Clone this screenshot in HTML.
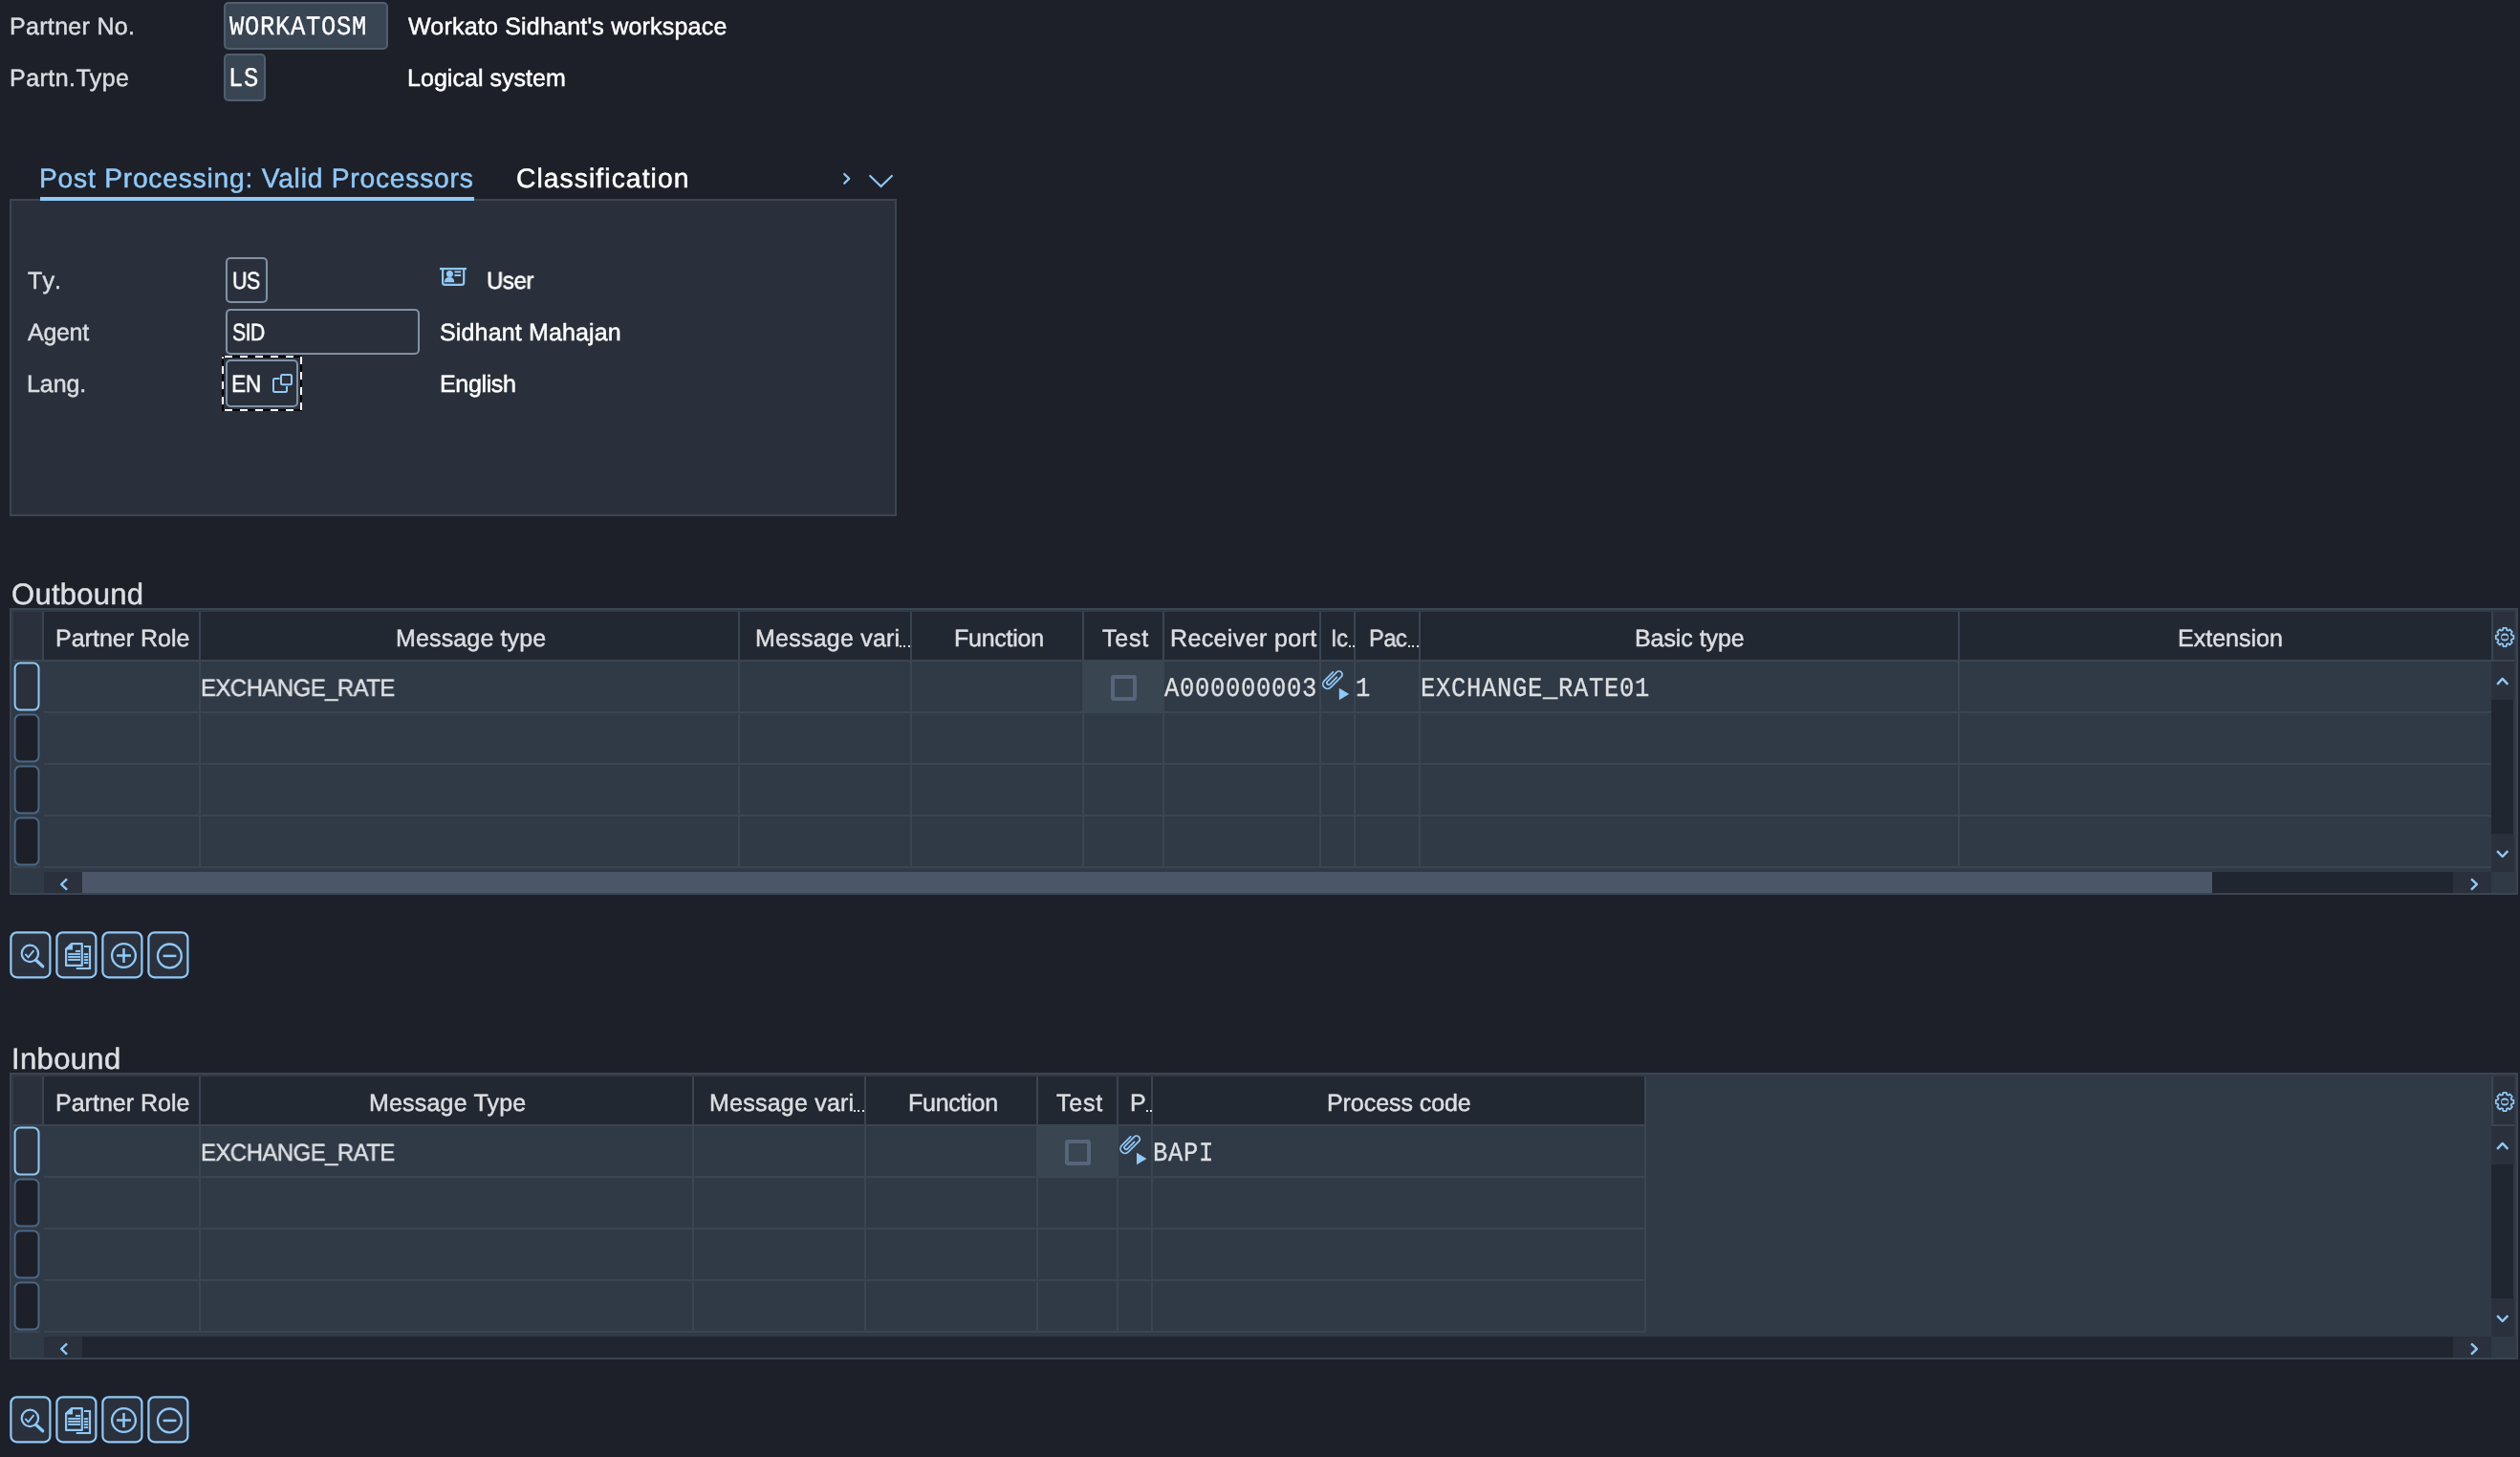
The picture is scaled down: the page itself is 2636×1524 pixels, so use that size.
<!DOCTYPE html>
<html><head><meta charset="utf-8"><title>Partner profiles</title>
<style>
html,body{margin:0;padding:0;}
body{width:2636px;height:1524px;background:#1D2029;position:relative;overflow:hidden;font-family:"Liberation Sans", sans-serif;}
.a{position:absolute;box-sizing:border-box;}
.t{position:absolute;white-space:pre;font-family:"Liberation Sans", sans-serif;will-change:transform;text-rendering:geometricPrecision;-webkit-text-stroke:0.5px currentColor;}
.m{position:absolute;white-space:pre;font-family:"Liberation Mono", monospace;will-change:transform;text-rendering:geometricPrecision;-webkit-text-stroke:0.3px currentColor;}
.ro{background:#3A4553;border:2px solid #4F5E70;border-radius:5px;}
.in{background:#2A303B;border:2px solid #8091A5;border-radius:5px;}
.g{background:#3A4552;}
.tb{background:#2A313C;border:2.5px solid #91C8F6;border-radius:8px;}
.rs{background:#1D2029;border:2px solid #4A6784;border-radius:7px;}
.rs1{background:#2A313C;border:2px solid #91C8F6;border-radius:7px;}
.cb{background:#3A4552;border:4px solid #56657A;border-radius:3px;}
svg{position:absolute;overflow:visible;}
</style></head><body>
<div class="a ro" style="left:234px;top:2px;width:172px;height:49.6px;"></div>
<div class="a ro" style="left:234px;top:56px;width:43.5px;height:49.6px;"></div>
<div class="a " style="left:10px;top:208px;width:928px;height:332px;background:#2A303B;border:2px solid #3B4552;"></div>
<div class="a " style="left:42px;top:206px;width:454px;height:4px;background:#91C8F6;"></div>
<svg style="left:875px;top:175px" width="70" height="30" viewBox="875 175 70 30"><path d="M883.2 182 L888.2 186.9 L883.2 191.8" fill="none" stroke="#91C8F6" stroke-width="2.2" stroke-linecap="round" stroke-linejoin="round"/><path d="M910.2 183.9 L921.5 195.1 L932.9 183.9" fill="none" stroke="#91C8F6" stroke-width="2.1" stroke-linecap="round"/></svg>
<div class="a in" style="left:236px;top:269px;width:43.5px;height:48px;"></div>
<div class="a in" style="left:236px;top:323px;width:203px;height:48px;"></div>
<div class="a in" style="left:236px;top:376px;width:75.7px;height:49.8px;"></div>
<svg style="left:231px;top:371px" width="86" height="60" viewBox="231 371 86 60"><rect x="233" y="373" width="82" height="56" fill="none" stroke="#000" stroke-width="2"/><rect x="233" y="373" width="82" height="56" fill="none" stroke="#fff" stroke-width="2" stroke-dasharray="8 8" stroke-dashoffset="-2"/></svg>
<svg style="left:458px;top:278px" width="32" height="24" viewBox="458 278 32 24"><rect x="460" y="280" width="28" height="2.2" fill="#91C8F6"/><path d="M463.1 281 V295.4 Q463.1 297.8 465.5 297.8 H482.8 Q485.2 297.8 485.2 295.4 V281" fill="none" stroke="#91C8F6" stroke-width="2.2"/><circle cx="470.4" cy="286.4" r="3.5" fill="#91C8F6"/><path d="M464.9 295.2 Q464.9 290 470.2 290 Q475.2 290 475.2 295.2 Z" fill="#91C8F6"/><rect x="475.4" y="283.4" width="6.8" height="2" fill="#91C8F6"/><rect x="475.4" y="287" width="6.8" height="2" fill="#91C8F6"/></svg>
<svg style="left:284px;top:390px" width="24" height="22" viewBox="284 390 24 22"><path d="M292.5 396 H287.5 Q286 396 286 397.5 V408.5 Q286 410 287.5 410 H298.5 Q300 410 300 408.5 V404" fill="none" stroke="#91C8F6" stroke-width="2"/><rect x="294" y="392" width="11" height="10.2" rx="1.5" fill="none" stroke="#91C8F6" stroke-width="2"/></svg>
<div class="a " style="left:10px;top:636px;width:2624px;height:300px;background:#303A46;border:2px solid #3A4552;"></div>
<div class="a " style="left:14px;top:640px;width:30px;height:50px;background:#2A313C;"></div>
<div class="a " style="left:46px;top:640px;width:2560px;height:50px;background:#222832;"></div>
<div class="a " style="left:2606px;top:640px;width:2px;height:50px;background:#3A4552;"></div>
<div class="a " style="left:2608px;top:640px;width:22px;height:50px;background:#2A313C;"></div>
<div class="a " style="left:2606px;top:690px;width:24px;height:2px;background:#3A4552;"></div>
<div class="a " style="left:14px;top:690px;width:2592px;height:2px;background:#3A4552;"></div>
<div class="a " style="left:46px;top:744px;width:2560px;height:2px;background:#3A4552;"></div>
<div class="a " style="left:46px;top:798px;width:2560px;height:2px;background:#3A4552;"></div>
<div class="a " style="left:46px;top:852px;width:2560px;height:2px;background:#3A4552;"></div>
<div class="a " style="left:46px;top:906px;width:2560px;height:2px;background:#3A4552;"></div>
<div class="a " style="left:14px;top:906px;width:28px;height:1.5px;background:#3A4552;"></div>
<div class="a " style="left:44px;top:640px;width:2px;height:52px;background:#3A4552;"></div>
<div class="a " style="left:208px;top:640px;width:2px;height:268px;background:#3A4552;"></div>
<div class="a " style="left:772px;top:640px;width:2px;height:268px;background:#3A4552;"></div>
<div class="a " style="left:952px;top:640px;width:2px;height:268px;background:#3A4552;"></div>
<div class="a " style="left:1132px;top:640px;width:2px;height:268px;background:#3A4552;"></div>
<div class="a " style="left:1216px;top:640px;width:2px;height:268px;background:#3A4552;"></div>
<div class="a " style="left:1380px;top:640px;width:2px;height:268px;background:#3A4552;"></div>
<div class="a " style="left:1416px;top:640px;width:2px;height:268px;background:#3A4552;"></div>
<div class="a " style="left:1484px;top:640px;width:2px;height:268px;background:#3A4552;"></div>
<div class="a " style="left:2048px;top:640px;width:2px;height:268px;background:#3A4552;"></div>
<div class="a " style="left:1132px;top:690px;width:86px;height:56px;background:#3A4552;"></div>
<div class="a " style="left:2606px;top:692px;width:24px;height:40px;background:#2A313C;"></div>
<div class="a " style="left:2606px;top:732px;width:23px;height:140px;background:#20262F;"></div>
<div class="a " style="left:2606px;top:872px;width:24px;height:40px;background:#2A313C;"></div>
<div class="a " style="left:46px;top:912px;width:40px;height:22px;background:#2A313C;"></div>
<div class="a " style="left:86px;top:912px;width:2480px;height:22px;background:#20262F;"></div>
<div class="a " style="left:86px;top:912px;width:2228px;height:22px;background:#4B5768;"></div>
<div class="a " style="left:2566px;top:912px;width:40px;height:22px;background:#2A313C;"></div>
<div class="a cb" style="left:1162px;top:706px;width:27px;height:27px;"></div>
<svg style="left:0;top:636px" width="2636" height="300" viewBox="0 636 2636 300">
<rect x="15.6" y="693.6" width="24.9" height="49" rx="5.6" fill="#2A313C" stroke="#91C8F6" stroke-width="2"/>
<rect x="15.6" y="747.6" width="24.9" height="49" rx="5.6" fill="#1D2029" stroke="#4A6784" stroke-width="2"/>
<rect x="15.6" y="801.6" width="24.9" height="49" rx="5.6" fill="#1D2029" stroke="#4A6784" stroke-width="2"/>
<rect x="15.6" y="855.6" width="24.9" height="49" rx="5.6" fill="#1D2029" stroke="#4A6784" stroke-width="2"/>
<path d="M2618.05 659.00 L2618.27 656.89 L2621.83 656.89 L2622.05 659.00 L2623.75 659.73 L2625.35 658.39 L2627.87 660.99 L2626.58 662.64 L2627.28 664.39 L2629.33 664.61 L2629.33 668.29 L2627.28 668.51 L2626.58 670.26 L2627.87 671.91 L2625.35 674.51 L2623.75 673.17 L2622.05 673.90 L2621.83 676.01 L2618.27 676.01 L2618.05 673.90 L2616.35 673.17 L2614.75 674.51 L2612.23 671.91 L2613.52 670.26 L2612.82 668.51 L2610.77 668.29 L2610.77 664.61 L2612.82 664.39 L2613.52 662.64 L2612.23 660.99 L2614.75 658.39 L2616.35 659.73 Z" fill="none" stroke="#91C8F6" stroke-width="1.75" stroke-linejoin="round"/><circle cx="2620.05" cy="666.45" r="4.0" fill="#91C8F6"/><ellipse cx="2620.05" cy="666.45" rx="3.2" ry="2.0" fill="#2A313C"/>
<path d="M2612.1 715.85 L2617.7 709.9499999999999 L2623.2999999999997 715.85" fill="none" stroke="#91C8F6" stroke-width="2.4" stroke-linejoin="round"/>
<path d="M2612.1 890.0999999999999 L2617.7 896.0 L2623.2999999999997 890.0999999999999" fill="none" stroke="#91C8F6" stroke-width="2.4" stroke-linejoin="round"/>
<path d="M70.05 919.4 L64.14999999999999 925 L70.05 930.6" fill="none" stroke="#91C8F6" stroke-width="2.4" stroke-linejoin="round"/>
<path d="M2585.0 919.35 L2590.8999999999996 924.95 L2585.0 930.5500000000001" fill="none" stroke="#91C8F6" stroke-width="2.4" stroke-linejoin="round"/>
<g transform="translate(1393.60 710.55) rotate(-45) scale(0.93)"><path d="M6.5 -5.2 H-7.5 A5.2 5.2 0 0 0 -7.5 5.2 H9.2 A3.7 3.7 0 0 0 9.2 -2.2 H-5.6 A2.1 2.1 0 0 0 -5.6 2 H5.2" fill="none" stroke="#91C8F6" stroke-width="1.9" stroke-linecap="round"/></g><path d="M1400.80 719.70 L1411.20 725.90 L1400.80 732.30 Z" fill="#91C8F6"/>
</svg>
<svg style="left:0;top:972px" width="220" height="54" viewBox="0 972 220 54">
<rect x="11.4" y="975.3" width="41" height="47.1" rx="6.2" fill="#2A313C" stroke="#91C8F6" stroke-width="2.2"/>
<rect x="59.4" y="975.3" width="41" height="47.1" rx="6.2" fill="#2A313C" stroke="#91C8F6" stroke-width="2.2"/>
<rect x="107.4" y="975.3" width="41" height="47.1" rx="6.2" fill="#2A313C" stroke="#91C8F6" stroke-width="2.2"/>
<rect x="155.4" y="975.3" width="41" height="47.1" rx="6.2" fill="#2A313C" stroke="#91C8F6" stroke-width="2.2"/>
<circle cx="31.4" cy="997.4" r="8.7" fill="none" stroke="#91C8F6" stroke-width="2.2"/>
<path d="M37.6 1004.3 L44.7 1010.8" stroke="#91C8F6" stroke-width="3.2" stroke-linecap="round"/>
<path d="M26.4 997.9 L29.6 1001.3 L35.4 994.1" fill="none" stroke="#91C8F6" stroke-width="1.9"/>
<path d="M79.8 1013.0 H94 V990.0 H88" fill="none" stroke="#91C8F6" stroke-width="2.2"/>
<rect x="87.8" y="997.1" width="4.4" height="2" fill="#91C8F6"/>
<rect x="87.8" y="1000.1" width="4.4" height="2" fill="#91C8F6"/>
<rect x="87.8" y="1003.1" width="4.4" height="2" fill="#91C8F6"/>
<rect x="87.8" y="1006.1" width="4.4" height="2" fill="#91C8F6"/>
<path d="M69.1 992.5 L75 987.1 H85.8 V1009.9 H69.1 Z" fill="#2A313C" stroke="#91C8F6" stroke-width="2.2" stroke-linejoin="round"/>
<path d="M69.1 992.9 L75.4 987.1 V992.9 Z" fill="#91C8F6" stroke="#91C8F6" stroke-width="1.2" stroke-linejoin="round"/>
<rect x="79" y="993.9" width="5" height="2" fill="#91C8F6"/>
<rect x="71.2" y="996.9" width="12.8" height="2" fill="#91C8F6"/>
<rect x="71.2" y="999.9" width="12.8" height="2" fill="#91C8F6"/>
<rect x="71.2" y="1002.9" width="12.8" height="2" fill="#91C8F6"/>
<circle cx="129.5" cy="999.5" r="12.4" fill="none" stroke="#91C8F6" stroke-width="2.3"/>
<path d="M122 999.5 H137 M129.5 992.0 V1007.0" stroke="#91C8F6" stroke-width="2.5"/>
<circle cx="177.4" cy="999.9" r="12.4" fill="none" stroke="#91C8F6" stroke-width="2.3"/>
<path d="M170.6 999.9 H184.4" stroke="#91C8F6" stroke-width="2.5"/>
</svg>
<div class="a " style="left:10px;top:1122px;width:2624px;height:300px;background:#303A46;border:2px solid #3A4552;"></div>
<div class="a " style="left:14px;top:1126px;width:30px;height:50px;background:#2A313C;"></div>
<div class="a " style="left:46px;top:1126px;width:1676px;height:50px;background:#222832;"></div>
<div class="a " style="left:2606px;top:1126px;width:2px;height:50px;background:#3A4552;"></div>
<div class="a " style="left:2608px;top:1126px;width:22px;height:50px;background:#2A313C;"></div>
<div class="a " style="left:2606px;top:1176px;width:24px;height:2px;background:#3A4552;"></div>
<div class="a " style="left:14px;top:1176px;width:1708px;height:2px;background:#3A4552;"></div>
<div class="a " style="left:46px;top:1230px;width:1676px;height:2px;background:#3A4552;"></div>
<div class="a " style="left:46px;top:1284px;width:1676px;height:2px;background:#3A4552;"></div>
<div class="a " style="left:46px;top:1338px;width:1676px;height:2px;background:#3A4552;"></div>
<div class="a " style="left:46px;top:1392px;width:1676px;height:2px;background:#3A4552;"></div>
<div class="a " style="left:14px;top:1392px;width:28px;height:1.5px;background:#3A4552;"></div>
<div class="a " style="left:44px;top:1126px;width:2px;height:52px;background:#3A4552;"></div>
<div class="a " style="left:208px;top:1126px;width:2px;height:268px;background:#3A4552;"></div>
<div class="a " style="left:724px;top:1126px;width:2px;height:268px;background:#3A4552;"></div>
<div class="a " style="left:904px;top:1126px;width:2px;height:268px;background:#3A4552;"></div>
<div class="a " style="left:1084px;top:1126px;width:2px;height:268px;background:#3A4552;"></div>
<div class="a " style="left:1168px;top:1126px;width:2px;height:268px;background:#3A4552;"></div>
<div class="a " style="left:1204px;top:1126px;width:2px;height:268px;background:#3A4552;"></div>
<div class="a " style="left:1720px;top:1126px;width:2px;height:268px;background:#3A4552;"></div>
<div class="a " style="left:1084px;top:1176px;width:86px;height:56px;background:#3A4552;"></div>
<div class="a " style="left:2606px;top:1178px;width:24px;height:40px;background:#2A313C;"></div>
<div class="a " style="left:2606px;top:1218px;width:23px;height:140px;background:#20262F;"></div>
<div class="a " style="left:2606px;top:1358px;width:24px;height:40px;background:#2A313C;"></div>
<div class="a " style="left:46px;top:1398px;width:40px;height:22px;background:#2A313C;"></div>
<div class="a " style="left:86px;top:1398px;width:2480px;height:22px;background:#20262F;"></div>
<div class="a " style="left:2566px;top:1398px;width:40px;height:22px;background:#2A313C;"></div>
<div class="a cb" style="left:1114px;top:1192px;width:27px;height:27px;"></div>
<svg style="left:0;top:1122px" width="2636" height="300" viewBox="0 1122 2636 300">
<rect x="15.6" y="1179.6" width="24.9" height="49" rx="5.6" fill="#2A313C" stroke="#91C8F6" stroke-width="2"/>
<rect x="15.6" y="1233.6" width="24.9" height="49" rx="5.6" fill="#1D2029" stroke="#4A6784" stroke-width="2"/>
<rect x="15.6" y="1287.6" width="24.9" height="49" rx="5.6" fill="#1D2029" stroke="#4A6784" stroke-width="2"/>
<rect x="15.6" y="1341.6" width="24.9" height="49" rx="5.6" fill="#1D2029" stroke="#4A6784" stroke-width="2"/>
<path d="M2618.05 1145.00 L2618.27 1142.89 L2621.83 1142.89 L2622.05 1145.00 L2623.75 1145.73 L2625.35 1144.39 L2627.87 1146.99 L2626.58 1148.64 L2627.28 1150.39 L2629.33 1150.61 L2629.33 1154.29 L2627.28 1154.51 L2626.58 1156.26 L2627.87 1157.91 L2625.35 1160.51 L2623.75 1159.17 L2622.05 1159.90 L2621.83 1162.01 L2618.27 1162.01 L2618.05 1159.90 L2616.35 1159.17 L2614.75 1160.51 L2612.23 1157.91 L2613.52 1156.26 L2612.82 1154.51 L2610.77 1154.29 L2610.77 1150.61 L2612.82 1150.39 L2613.52 1148.64 L2612.23 1146.99 L2614.75 1144.39 L2616.35 1145.73 Z" fill="none" stroke="#91C8F6" stroke-width="1.75" stroke-linejoin="round"/><circle cx="2620.05" cy="1152.45" r="4.0" fill="#91C8F6"/><ellipse cx="2620.05" cy="1152.45" rx="3.2" ry="2.0" fill="#2A313C"/>
<path d="M2612.1 1201.8500000000001 L2617.7 1195.95 L2623.2999999999997 1201.8500000000001" fill="none" stroke="#91C8F6" stroke-width="2.4" stroke-linejoin="round"/>
<path d="M2612.1 1376.1 L2617.7 1382.0 L2623.2999999999997 1376.1" fill="none" stroke="#91C8F6" stroke-width="2.4" stroke-linejoin="round"/>
<path d="M70.05 1405.4 L64.14999999999999 1411 L70.05 1416.6" fill="none" stroke="#91C8F6" stroke-width="2.4" stroke-linejoin="round"/>
<path d="M2585.0 1405.3500000000001 L2590.8999999999996 1410.95 L2585.0 1416.55" fill="none" stroke="#91C8F6" stroke-width="2.4" stroke-linejoin="round"/>
<g transform="translate(1181.80 1196.55) rotate(-45) scale(0.93)"><path d="M6.5 -5.2 H-7.5 A5.2 5.2 0 0 0 -7.5 5.2 H9.2 A3.7 3.7 0 0 0 9.2 -2.2 H-5.6 A2.1 2.1 0 0 0 -5.6 2 H5.2" fill="none" stroke="#91C8F6" stroke-width="1.9" stroke-linecap="round"/></g><path d="M1189.00 1205.70 L1199.40 1211.90 L1189.00 1218.30 Z" fill="#91C8F6"/>
</svg>
<svg style="left:0;top:1458px" width="220" height="54" viewBox="0 1458 220 54">
<rect x="11.4" y="1461.3" width="41" height="47.1" rx="6.2" fill="#2A313C" stroke="#91C8F6" stroke-width="2.2"/>
<rect x="59.4" y="1461.3" width="41" height="47.1" rx="6.2" fill="#2A313C" stroke="#91C8F6" stroke-width="2.2"/>
<rect x="107.4" y="1461.3" width="41" height="47.1" rx="6.2" fill="#2A313C" stroke="#91C8F6" stroke-width="2.2"/>
<rect x="155.4" y="1461.3" width="41" height="47.1" rx="6.2" fill="#2A313C" stroke="#91C8F6" stroke-width="2.2"/>
<circle cx="31.4" cy="1483.4" r="8.7" fill="none" stroke="#91C8F6" stroke-width="2.2"/>
<path d="M37.6 1490.3 L44.7 1496.8" stroke="#91C8F6" stroke-width="3.2" stroke-linecap="round"/>
<path d="M26.4 1483.9 L29.6 1487.3 L35.4 1480.1" fill="none" stroke="#91C8F6" stroke-width="1.9"/>
<path d="M79.8 1499.0 H94 V1476.0 H88" fill="none" stroke="#91C8F6" stroke-width="2.2"/>
<rect x="87.8" y="1483.1" width="4.4" height="2" fill="#91C8F6"/>
<rect x="87.8" y="1486.1" width="4.4" height="2" fill="#91C8F6"/>
<rect x="87.8" y="1489.1" width="4.4" height="2" fill="#91C8F6"/>
<rect x="87.8" y="1492.1" width="4.4" height="2" fill="#91C8F6"/>
<path d="M69.1 1478.5 L75 1473.1 H85.8 V1495.9 H69.1 Z" fill="#2A313C" stroke="#91C8F6" stroke-width="2.2" stroke-linejoin="round"/>
<path d="M69.1 1478.9 L75.4 1473.1 V1478.9 Z" fill="#91C8F6" stroke="#91C8F6" stroke-width="1.2" stroke-linejoin="round"/>
<rect x="79" y="1479.9" width="5" height="2" fill="#91C8F6"/>
<rect x="71.2" y="1482.9" width="12.8" height="2" fill="#91C8F6"/>
<rect x="71.2" y="1485.9" width="12.8" height="2" fill="#91C8F6"/>
<rect x="71.2" y="1488.9" width="12.8" height="2" fill="#91C8F6"/>
<circle cx="129.5" cy="1485.5" r="12.4" fill="none" stroke="#91C8F6" stroke-width="2.3"/>
<path d="M122 1485.5 H137 M129.5 1478.0 V1493.0" stroke="#91C8F6" stroke-width="2.5"/>
<circle cx="177.4" cy="1485.9" r="12.4" fill="none" stroke="#91C8F6" stroke-width="2.3"/>
<path d="M170.6 1485.9 H184.4" stroke="#91C8F6" stroke-width="2.5"/>
</svg>
<div class="t" style="left:9.90px;top:12.00px;font-size:25px;line-height:32px;letter-spacing:0.321px;color:#D9DCE0">Partner No.</div>
<div class="t" style="left:9.90px;top:66.00px;font-size:25px;line-height:32px;letter-spacing:0.456px;color:#D9DCE0">Partn.Type</div>
<div class="m" style="left:240.30px;top:13.00px;font-size:25.5px;line-height:33px;letter-spacing:0.700px;color:#FFFFFF;transform:scaleY(1.11);transform-origin:0 23.00px">WORKATOSM</div>
<div class="m" style="left:238.96px;top:67.00px;font-size:25.5px;line-height:33px;letter-spacing:0.700px;color:#FFFFFF;transform:scaleY(1.11);transform-origin:0 23.00px">LS</div>
<div class="t" style="left:426.70px;top:12.00px;font-size:25px;line-height:32px;letter-spacing:0.201px;color:#FFFFFF">Workato Sidhant's workspace</div>
<div class="t" style="left:425.60px;top:66.00px;font-size:25px;line-height:32px;letter-spacing:0.037px;color:#FFFFFF">Logical system</div>
<div class="t" style="left:40.95px;top:168.00px;font-size:28.2px;line-height:36px;letter-spacing:0.783px;color:#91C8F6">Post Processing: Valid Processors</div>
<div class="t" style="left:540.20px;top:168.00px;font-size:28.2px;line-height:36px;letter-spacing:1.102px;color:#FFFFFF">Classification</div>
<div class="t" style="left:28.70px;top:278.00px;font-size:25px;line-height:32px;letter-spacing:1.682px;color:#D9DCE0">Ty.</div>
<div class="t" style="left:29.10px;top:332.00px;font-size:25px;line-height:32px;letter-spacing:-0.297px;color:#D9DCE0">Agent</div>
<div class="t" style="left:27.70px;top:386.00px;font-size:25px;line-height:32px;letter-spacing:-0.066px;color:#D9DCE0">Lang.</div>
<div class="t" style="left:242.54px;top:278.00px;font-size:25px;line-height:32px;letter-spacing:-0.500px;color:#FFFFFF;transform:scaleX(0.8570);transform-origin:0 0">US</div>
<div class="t" style="left:242.56px;top:332.00px;font-size:25px;line-height:32px;letter-spacing:-0.500px;color:#FFFFFF;transform:scaleX(0.8415);transform-origin:0 0">SID</div>
<div class="t" style="left:242.18px;top:386.00px;font-size:25px;line-height:32px;letter-spacing:-0.500px;color:#FFFFFF;transform:scaleX(0.9078);transform-origin:0 0">EN</div>
<div class="t" style="left:509.34px;top:278.00px;font-size:25px;line-height:32px;letter-spacing:-0.500px;color:#FFFFFF;transform:scaleX(0.9648);transform-origin:0 0">User</div>
<div class="t" style="left:460.10px;top:332.00px;font-size:25px;line-height:32px;letter-spacing:0.148px;color:#FFFFFF">Sidhant Mahajan</div>
<div class="t" style="left:459.60px;top:386.00px;font-size:25px;line-height:32px;letter-spacing:-0.348px;color:#FFFFFF">English</div>
<div class="t" style="left:12.30px;top:602.00px;font-size:31px;line-height:39px;letter-spacing:0.267px;color:#DDDFE2">Outbound</div>
<div class="t" style="left:11.90px;top:1088.00px;font-size:31px;line-height:39px;letter-spacing:0.347px;color:#DDDFE2">Inbound</div>
<div class="t" style="left:57.90px;top:652.00px;font-size:25px;line-height:32px;letter-spacing:0.015px;color:#DCDEE1">Partner Role</div>
<div class="t" style="left:413.50px;top:652.00px;font-size:25px;line-height:32px;letter-spacing:0.142px;color:#DCDEE1">Message type</div>
<div class="t" style="left:789.60px;top:652.00px;font-size:25px;line-height:32px;letter-spacing:0.226px;color:#DCDEE1">Message vari</div>
<div class="t" style="left:997.90px;top:652.00px;font-size:25px;line-height:32px;letter-spacing:-0.255px;color:#DCDEE1">Function</div>
<div class="t" style="left:1152.90px;top:652.00px;font-size:25px;line-height:32px;letter-spacing:0.765px;color:#DCDEE1">Test</div>
<div class="t" style="left:1223.90px;top:652.00px;font-size:25px;line-height:32px;letter-spacing:0.373px;color:#DCDEE1">Receiver port</div>
<div class="t" style="left:1391.92px;top:652.00px;font-size:25px;line-height:32px;letter-spacing:-0.500px;color:#DCDEE1;transform:scaleX(0.9425);transform-origin:0 0">Ic</div>
<div class="t" style="left:1431.91px;top:652.00px;font-size:25px;line-height:32px;letter-spacing:-0.500px;color:#DCDEE1;transform:scaleX(0.9450);transform-origin:0 0">Pac</div>
<div class="t" style="left:1709.90px;top:652.00px;font-size:25px;line-height:32px;letter-spacing:-0.070px;color:#DCDEE1">Basic type</div>
<div class="t" style="left:2277.90px;top:652.00px;font-size:25px;line-height:32px;letter-spacing:0.002px;color:#DCDEE1">Extension</div>
<div class="t" style="left:57.90px;top:1138.00px;font-size:25px;line-height:32px;letter-spacing:0.015px;color:#DCDEE1">Partner Role</div>
<div class="t" style="left:385.90px;top:1138.00px;font-size:25px;line-height:32px;letter-spacing:0.183px;color:#DCDEE1">Message Type</div>
<div class="t" style="left:741.60px;top:1138.00px;font-size:25px;line-height:32px;letter-spacing:0.226px;color:#DCDEE1">Message vari</div>
<div class="t" style="left:949.90px;top:1138.00px;font-size:25px;line-height:32px;letter-spacing:-0.255px;color:#DCDEE1">Function</div>
<div class="t" style="left:1104.90px;top:1138.00px;font-size:25px;line-height:32px;letter-spacing:0.765px;color:#DCDEE1">Test</div>
<div class="t" style="left:1181.70px;top:1138.00px;font-size:25px;line-height:32px;letter-spacing:0.000px;color:#DCDEE1">P</div>
<div class="t" style="left:1387.60px;top:1138.00px;font-size:25px;line-height:32px;letter-spacing:-0.069px;color:#DCDEE1">Process code</div>
<div class="t" style="left:209.99px;top:704.00px;font-size:25px;line-height:32px;letter-spacing:-0.500px;color:#DDDFE2;transform:scaleX(0.9546);transform-origin:0 0">EXCHANGE_RATE</div>
<div class="m" style="left:1218.30px;top:705.00px;font-size:25.5px;line-height:33px;letter-spacing:0.700px;color:#DDDFE2;transform:scaleY(1.11);transform-origin:0 23.00px">A000000003</div>
<div class="m" style="left:1418.11px;top:705.00px;font-size:25.5px;line-height:33px;letter-spacing:0.700px;color:#DDDFE2;transform:scaleY(1.11);transform-origin:0 23.00px">1</div>
<div class="m" style="left:1486.40px;top:705.00px;font-size:25.5px;line-height:33px;letter-spacing:0.700px;color:#DDDFE2;transform:scaleY(1.11);transform-origin:0 23.00px">EXCHANGE_RATE01</div>
<div class="t" style="left:209.99px;top:1190.00px;font-size:25px;line-height:32px;letter-spacing:-0.500px;color:#DDDFE2;transform:scaleX(0.9546);transform-origin:0 0">EXCHANGE_RATE</div>
<div class="m" style="left:1206.40px;top:1191.00px;font-size:25.5px;line-height:33px;letter-spacing:0.700px;color:#DDDFE2;transform:scaleY(1.11);transform-origin:0 23.00px">BAPI</div>
<div class="a " style="left:940.6px;top:675px;width:2px;height:2px;background:#DCDEE1;"></div>
<div class="a " style="left:945.2px;top:675px;width:2px;height:2px;background:#DCDEE1;"></div>
<div class="a " style="left:949.8px;top:675px;width:2px;height:2px;background:#DCDEE1;"></div>
<div class="a " style="left:1411px;top:675px;width:2px;height:2px;background:#DCDEE1;"></div>
<div class="a " style="left:1415px;top:675px;width:2px;height:2px;background:#DCDEE1;"></div>
<div class="a " style="left:1472.9px;top:675px;width:2px;height:2px;background:#DCDEE1;"></div>
<div class="a " style="left:1477.4px;top:675px;width:2px;height:2px;background:#DCDEE1;"></div>
<div class="a " style="left:1481.9px;top:675px;width:2px;height:2px;background:#DCDEE1;"></div>
<div class="a " style="left:892.6px;top:1161px;width:2px;height:2px;background:#DCDEE1;"></div>
<div class="a " style="left:897.2px;top:1161px;width:2px;height:2px;background:#DCDEE1;"></div>
<div class="a " style="left:901.8px;top:1161px;width:2px;height:2px;background:#DCDEE1;"></div>
<div class="a " style="left:1198.5px;top:1161px;width:2px;height:2px;background:#DCDEE1;"></div>
<div class="a " style="left:1203px;top:1161px;width:2px;height:2px;background:#DCDEE1;"></div>
</body></html>
